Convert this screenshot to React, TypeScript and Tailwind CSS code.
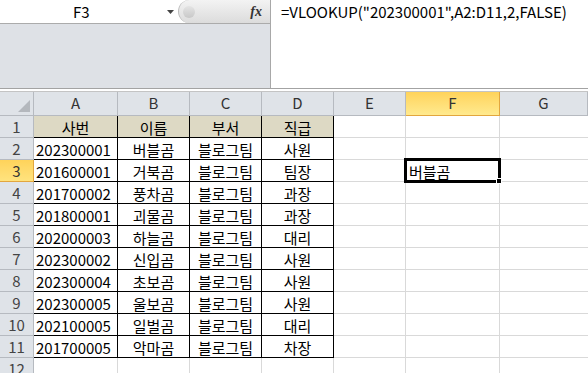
import React from 'react'

const rows = [
  ['사번', '이름', '부서', '직급'],
  ['202300001', '버블곰', '블로그팀', '사원'],
  ['201600001', '거북곰', '블로그팀', '팀장'],
  ['201700002', '풍차곰', '블로그팀', '과장'],
  ['201800001', '괴물곰', '블로그팀', '과장'],
  ['202000003', '하늘곰', '블로그팀', '대리'],
  ['202300002', '신입곰', '블로그팀', '사원'],
  ['202300004', '초보곰', '블로그팀', '사원'],
  ['202300005', '울보곰', '블로그팀', '사원'],
  ['202100005', '일벌곰', '블로그팀', '대리'],
  ['201700005', '악마곰', '블로그팀', '차장'],
  ['', '', '', ''],
]

const letters = ['A', 'B', 'C', 'D', 'E', 'F', 'G']
const gridCols = 'grid grid-cols-[34px_84px_72px_72px_72px_72px_94px_1fr]'

function FormulaBar() {
  return (
    <div className="flex h-[89px] border-b border-[#a3a3a3]">
      <div className="flex w-[271px] flex-col border-r border-[#a8a8a8] bg-[#dee1e6]">
        <div className="flex h-[24px] border-b border-[#ababab] bg-white">
          <div className="flex w-[178px] items-center">
            <span className="ml-[73px] text-[15px] leading-none">F3</span>
            <svg className="ml-[77px]" width="7" height="4" viewBox="0 0 7 4">
              <path d="M0 0h7L3.5 4z" fill="#444" />
            </svg>
          </div>
          <div className="flex flex-1 items-center rounded-l-[12px] border-l border-[#bcbcbc] bg-gradient-to-b from-[#f3f3f3] to-[#dcdcdc]">
            <div className="ml-[4px] h-[12px] w-[12px] rounded-full bg-gradient-to-b from-[#e4e4e4] to-[#c8c8c8]" />
            <span className="ml-auto mr-[8px] font-['Liberation_Serif',serif] text-[14px] font-bold italic leading-none text-[#333]">
              fx
            </span>
          </div>
        </div>
      </div>
      <div className="flex-1 bg-white pl-[10px] pt-[2px] text-[15px] leading-[20px]">
        =VLOOKUP("202300001",A2:D11,2,FALSE)
      </div>
    </div>
  )
}

function HeaderRow() {
  return (
    <div className={`${gridCols} h-[24px]`}>
      <div className="flex items-end justify-end border-b border-r border-[#b6bac0] bg-[#dfe3e8] p-[3px]">
        <svg width="12" height="12" viewBox="0 0 12 12">
          <path d="M12 0V12H0z" fill="#b4b8bd" />
        </svg>
      </div>
      {letters.map((l) =>
        l === 'F' ? (
          <div
            key={l}
            className="flex items-center justify-center border-b border-r border-[#e2a63e] bg-gradient-to-b from-[#ffd35a] to-[#ffea8e] text-[15px] text-[#333]"
          >
            {l}
          </div>
        ) : (
          <div
            key={l}
            className="flex items-center justify-center border-b border-r border-[#b6bac0] bg-[#dfe3e8] text-[15px] text-[#333]"
          >
            {l}
          </div>
        )
      )}
    </div>
  )
}

function DataRow({ n, cells }: { n: number; cells: string[] }) {
  const inTable = n <= 11
  return (
    <div className={`${gridCols} h-[22px] text-[15px] leading-none`}>
      {n === 3 ? (
        <div className="flex items-center justify-center border-b border-r border-[#e2a63e] bg-gradient-to-b from-[#ffd35a] to-[#ffe37e] text-[15px] text-[#333]">
          {n}
        </div>
      ) : (
        <div className="flex items-center justify-center border-b border-r border-[#b6bac0] bg-[#dfe3e8] text-[15px] text-[#444]">
          {n}
        </div>
      )}
      {cells.map((c, i) => (
        <div
          key={i}
          className={
            inTable
              ? n === 1
                ? 'flex items-center justify-center border-b border-r border-black bg-[#ddd9c4] pt-[1px]'
                : i === 0
                  ? 'flex items-center border-b border-r border-black pl-[2px] pt-[1px]'
                  : 'flex items-center justify-center border-b border-r border-black pt-[1px]'
              : 'border-b border-r border-[#d9d9d9]'
          }
        >
          {c}
        </div>
      ))}
      <div className="border-b border-r border-[#d9d9d9]" />
      {n === 3 ? (
        <div className="relative flex items-center border-b border-r border-[#d9d9d9] pl-[3px] pt-[1px]">
          버블곰
          <div className="absolute -left-[2px] -top-[2px] h-[25px] w-[97px] border-[3px] border-black" />
          <div className="absolute -bottom-[3px] -right-[3px] h-[6px] w-[6px] border border-white bg-black" />
        </div>
      ) : (
        <div className="border-b border-r border-[#d9d9d9]" />
      )}
      <div className="border-b border-[#d9d9d9]" />
    </div>
  )
}

export default function App() {
  return (
    <div className="h-[373px] w-[588px] overflow-hidden bg-white font-['Noto_Sans_CJK_KR','Noto_Sans',sans-serif] text-black">
      <FormulaBar />
      <div className="h-[3px] border-b border-[#c4c4c4] bg-white" />
      <HeaderRow />
      {rows.map((r, i) => (
        <DataRow key={i} n={i + 1} cells={r} />
      ))}
    </div>
  )
}
